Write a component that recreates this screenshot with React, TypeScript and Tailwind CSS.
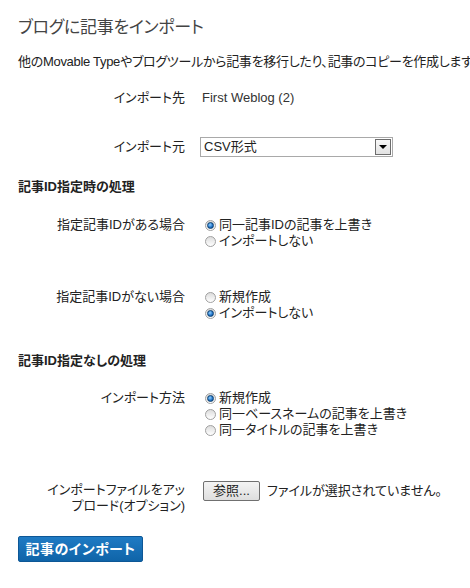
import type { ReactNode } from 'react';

const font = '[font-family:"Liberation_Sans","Noto_Sans_CJK_JP",sans-serif] [font-feature-settings:"palt"]';

const Radio = ({ checked, children }: { checked?: boolean; children: ReactNode }) => (
	<label className="flex items-center h-4 gap-[3px]">
		<span className="relative ml-[3px] w-[11px] h-[11px] rounded-full border border-[#a0a0a0] bg-[linear-gradient(#dcdcdc,#ffffff)] flex items-center justify-center">
			{checked && (
				<span className="w-[7px] h-[7px] rounded-full border border-[#0b3f6e] bg-[radial-gradient(circle_at_40%_35%,#8fd0ff,#1e6fc4_60%,#0e4b8c)]" />
			)}
		</span>
		<span>{children}</span>
	</label>
);

const Row = ({ label, children, className = '' }: { label: ReactNode; children: ReactNode; className?: string }) => (
	<div className={`flex ${className}`}>
		<div className="w-[167px] shrink-0 text-right">{label}</div>
		<div className="pl-[17px]">{children}</div>
	</div>
);

const App = () => {
	return (
		<div className={`${font} bg-white text-[#222] text-[13px] leading-4 pl-[18px] w-[470px] h-[588px] overflow-hidden`}>
			<h2 className="mt-[16px] text-[17px] leading-6 tracking-[-0.3px] font-normal text-[#444] whitespace-nowrap">ブログに記事をインポート</h2>
			<p className="mt-[14px] whitespace-nowrap tracking-[-0.3px]">他のMovable Typeやブログツールから記事を移行したり、記事のコピーを作成します。</p>

			<Row label="インポート先" className="mt-[20px]">
				<span className="text-[#333]">First Weblog (2)</span>
			</Row>

			<div className="flex items-center mt-[31px] h-5">
				<div className="w-[167px] shrink-0 text-right">インポート元</div>
				<div className="ml-[15px] w-[193px] h-5 border border-[#a9a9a9] bg-white flex items-center justify-between pl-[3px] pr-[1px]">
					<span>CSV形式</span>
					<span className="w-4 h-4 border border-[#6d6d6d] bg-[linear-gradient(#f8f8f8,#e2e2e2)] flex items-center justify-center">
						<span className="w-0 h-0 border-l-[4px] border-r-[4px] border-t-[4px] border-l-transparent border-r-transparent border-t-black" />
					</span>
				</div>
			</div>

			<h3 className="mt-[22px] font-bold">記事ID指定時の処理</h3>

			<Row label="指定記事IDがある場合" className="mt-[22px]">
				<Radio checked>同一記事IDの記事を上書き</Radio>
				<Radio>インポートしない</Radio>
			</Row>

			<Row label="指定記事IDがない場合" className="mt-[40px]">
				<Radio>新規作成</Radio>
				<Radio checked>インポートしない</Radio>
			</Row>

			<h3 className="mt-[32px] font-bold">記事ID指定なしの処理</h3>

			<Row label="インポート方法" className="mt-[21px]">
				<Radio checked>新規作成</Radio>
				<Radio>同一ベースネームの記事を上書き</Radio>
				<Radio>同一タイトルの記事を上書き</Radio>
			</Row>

			<div className="flex mt-[44px]">
				<div className="w-[167px] shrink-0 text-right pl-[26px]">インポートファイルをアップロード(オプション)</div>
				<div className="pl-[18px] flex items-start gap-[7px] -mt-[1px]">
					<button className="w-[57px] h-5 border border-[#707070] rounded-[2px] bg-[linear-gradient(#f4f4f4,#dedede)] text-[13px] leading-4">参照...</button>
					<span className="mt-[2px] whitespace-nowrap">ファイルが選択されていません。</span>
				</div>
			</div>

			<button className="mt-[22px] w-[125px] h-[26px] rounded-[2px] border border-[#0d5796] bg-[linear-gradient(#1f7bc4,#0f64a8)] text-white font-bold text-[14px] tracking-[0.5px]">
				記事のインポート
			</button>
		</div>
	);
};

export default App;
